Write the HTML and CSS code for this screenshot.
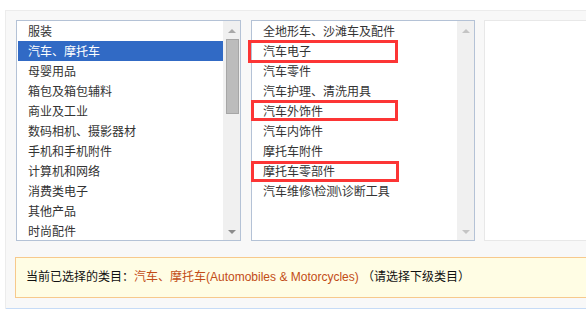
FILE: index.html
```html
<!DOCTYPE html>
<html lang="zh-CN">

<head>
    <meta charset="UTF-8">
    <title>选择类目</title>
    <link rel="stylesheet" href="styles.css">
</head>

<body>
    <div class="wrap">
        <div class="cats">
            <div class="box">
                <ul class="list">
                    <li>服装</li>
                    <li class="on">汽车、摩托车</li>
                    <li>母婴用品</li>
                    <li>箱包及箱包辅料</li>
                    <li>商业及工业</li>
                    <li>数码相机、摄影器材</li>
                    <li>手机和手机附件</li>
                    <li>计算机和网络</li>
                    <li>消费类电子</li>
                    <li>其他产品</li>
                    <li>时尚配件</li>
                </ul>
                <div class="bar">
                    <span class="up"></span>
                    <span class="thumb"></span>
                    <span class="down"></span>
                </div>
            </div>
            <div class="box">
                <ul class="list">
                    <li>全地形车、沙滩车及配件</li>
                    <li>汽车电子</li>
                    <li>汽车零件</li>
                    <li>汽车护理、清洗用具</li>
                    <li>汽车外饰件</li>
                    <li>汽车内饰件</li>
                    <li>摩托车附件</li>
                    <li>摩托车零部件</li>
                    <li>汽车维修\检测\诊断工具</li>
                </ul>
                <div class="bar off">
                    <span class="up"></span>
                    <span class="down"></span>
                </div>
                <span class="mark m1"></span>
                <span class="mark m2"></span>
                <span class="mark m3"></span>
            </div>
            <div class="box empty"></div>
        </div>
        <div class="current">
            当前已选择的类目：<span class="path">汽车、摩托车(Automobiles &amp; Motorcycles)</span> （请选择下级类目）
        </div>
        <div class="next"></div>
    </div>
</body>

</html>
```

FILE: styles.css
```css
* {
    margin: 0;
    padding: 0;
}

body {
    overflow: hidden;
    font-family: "Liberation Sans", "Noto Sans CJK SC", sans-serif;
    font-size: 12px;
    color: #333;
    background: #fff;
}

.wrap {
    margin: 10px 0 0 5px;
    background: #f8f8f8;
    border-top: 1px solid #ececec;
    border-left: 1px solid #ececec;
}

.cats {
    display: flex;
    gap: 10px;
    padding: 9px 0 0 10px;
}

.box {
    position: relative;
    display: flex;
    flex: none;
    width: 225px;
    height: 221px;
    box-sizing: border-box;
    border: 1px solid #b4c2d6;
    background: #fff;
}

.box + .box {
    width: 224px;
}

.box.empty {
    flex: 1;
    margin-left: -1px;
    border-color: #e8e8e8;
    border-right: none;
}

.list {
    flex: 1;
    list-style: none;
    padding-left: 1px;
    overflow: hidden;
}

.list li {
    height: 20px;
    line-height: 22px;
    padding-left: 10px;
    white-space: nowrap;
}

.list li.on {
    background: #316ac5;
    color: #fff;
}

.bar {
    display: flex;
    flex-direction: column;
    align-items: center;
    width: 17px;
    background: #f0f0f0;
}

.up,
.down {
    width: 0;
    height: 0;
    border-left: 4px solid transparent;
    border-right: 4px solid transparent;
}

.up {
    margin: 8px 0 6px;
    border-bottom: 4px solid #a8a8a8;
}

.down {
    margin: auto 0 6px;
    border-top: 4px solid #8c8c8c;
}

.bar.off .up {
    border-bottom-color: #c4c4c4;
}

.bar.off .down {
    border-top-color: #c4c4c4;
}

.thumb {
    width: 13px;
    height: 75px;
    box-sizing: border-box;
    margin-left: 2px;
    background: #bcbcbc;
    border: 1px solid #a6a6a6;
}

.mark {
    position: absolute;
    box-sizing: border-box;
    border: 3px solid #fc3535;
}

.m1 {
    left: -4px;
    top: 19px;
    width: 150px;
    height: 23px;
}

.m2 {
    left: -1px;
    top: 79px;
    width: 147px;
    height: 21px;
}

.m3 {
    left: -1px;
    top: 140px;
    width: 148px;
    height: 21px;
}

.current {
    margin: 16px 0 0 9px;
    height: 39px;
    line-height: 39px;
    padding-left: 10px;
    background: #fffde4;
    border: 1px solid #f7c98c;
    border-right: none;
    color: #111;
}

.path {
    color: #c24c16;
}

.next {
    height: 10px;
    margin-top: 10px;
    border-top: 1px solid #c6dbf6;
    background: #fbfdff;
}
```
